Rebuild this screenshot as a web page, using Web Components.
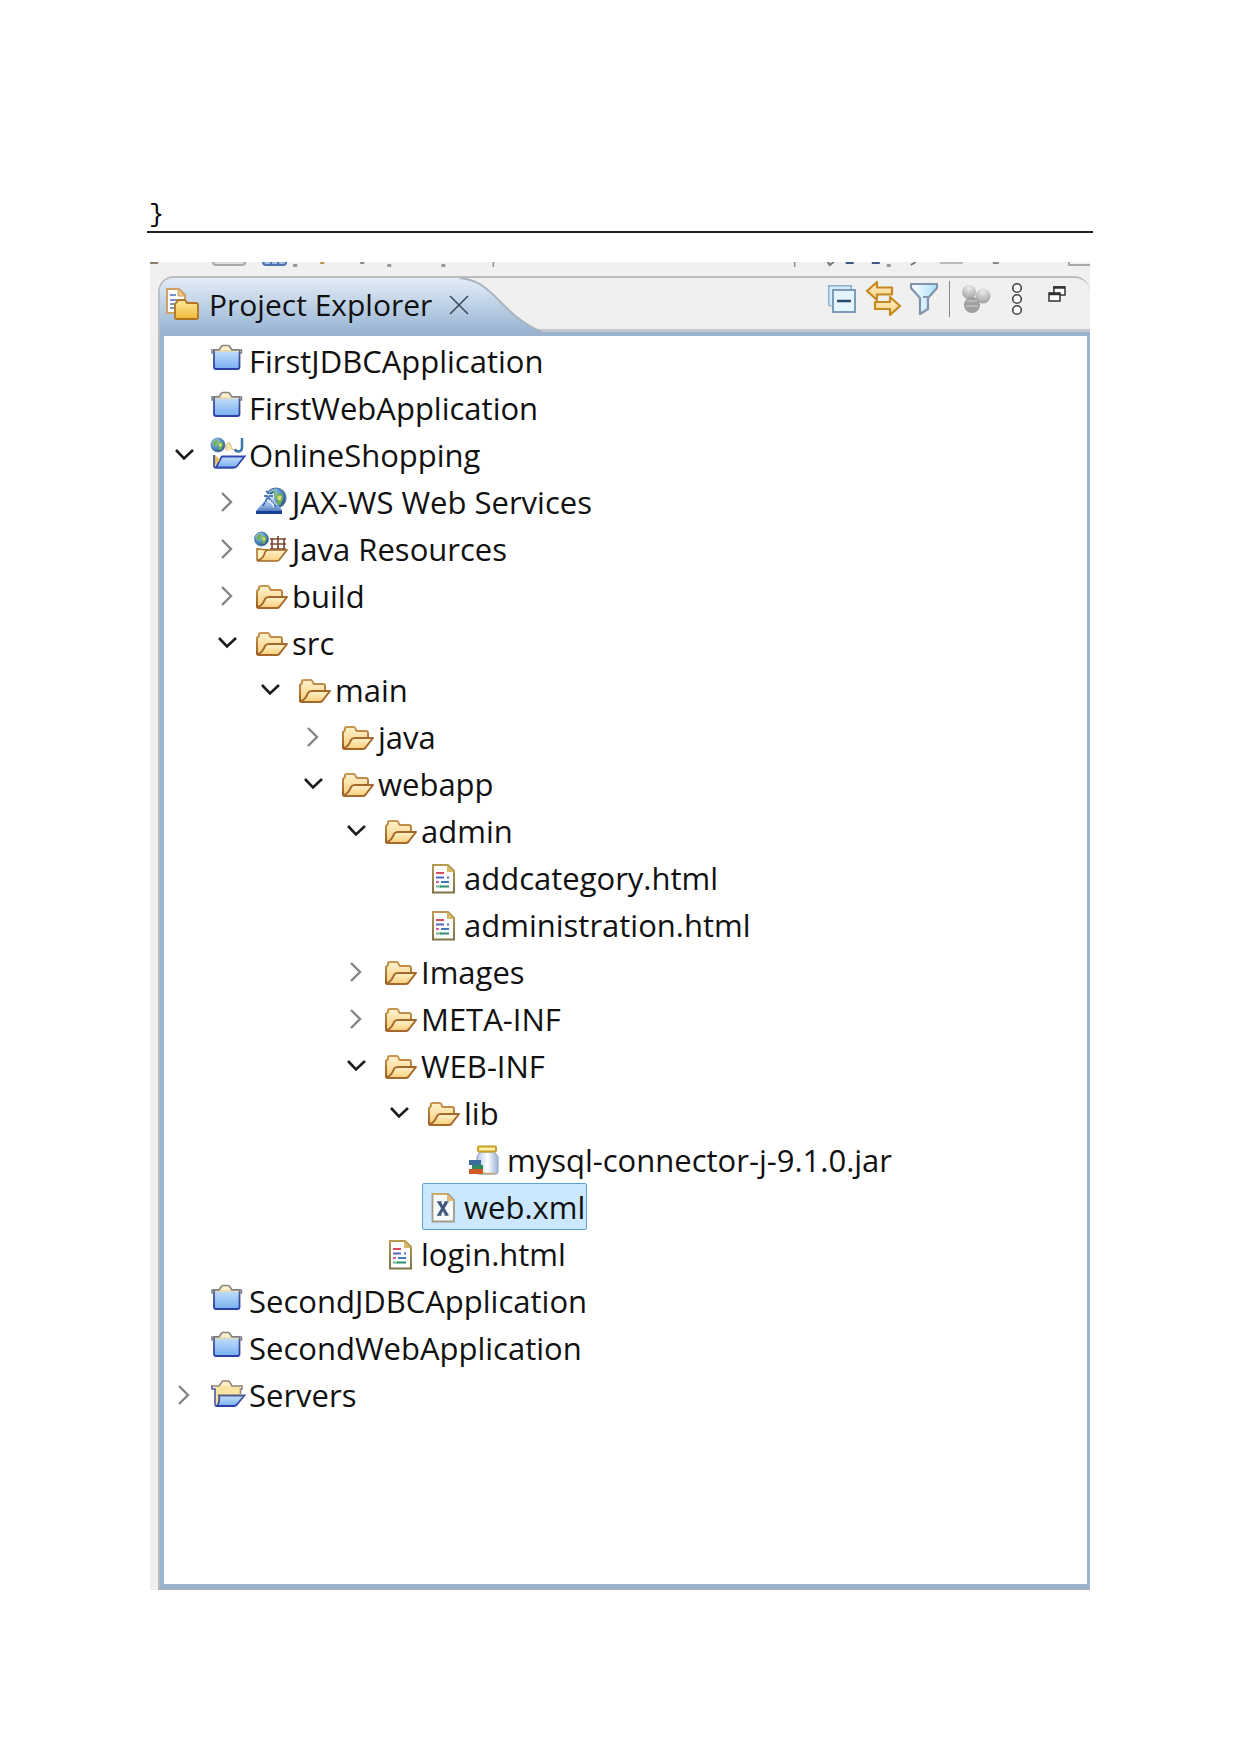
<!DOCTYPE html>
<html lang="en">
<head>
<meta charset="utf-8">
<title>Project Explorer</title>
<style>
  body { margin: 0; background: #fff; color: #111; font-family: "Open Sans", "Noto Sans", sans-serif; }
</style>
</head>
<body>
<doc-page>
  <code-line slot="code">}</code-line>
  <explorer-view>
    <view-tab slot="tab">Project Explorer</view-tab>
    <view-toolbar slot="tools"></view-toolbar>
    <tree-item icon="project" label="FirstJDBCApplication"></tree-item>
    <tree-item icon="project" label="FirstWebApplication"></tree-item>
    <tree-item icon="webproject" label="OnlineShopping" state="open">
      <tree-item icon="jaxws" label="JAX-WS Web Services" state="closed"></tree-item>
      <tree-item icon="javares" label="Java Resources" state="closed"></tree-item>
      <tree-item icon="folder" label="build" state="closed"></tree-item>
      <tree-item icon="folder" label="src" state="open">
        <tree-item icon="folder" label="main" state="open">
          <tree-item icon="folder" label="java" state="closed"></tree-item>
          <tree-item icon="folder" label="webapp" state="open">
            <tree-item icon="folder" label="admin" state="open">
              <tree-item icon="html" label="addcategory.html"></tree-item>
              <tree-item icon="html" label="administration.html"></tree-item>
            </tree-item>
            <tree-item icon="folder" label="Images" state="closed"></tree-item>
            <tree-item icon="folder" label="META-INF" state="closed"></tree-item>
            <tree-item icon="folder" label="WEB-INF" state="open">
              <tree-item icon="folder" label="lib" state="open">
                <tree-item icon="jar" label="mysql-connector-j-9.1.0.jar"></tree-item>
              </tree-item>
              <tree-item icon="xml" label="web.xml" selected></tree-item>
            </tree-item>
            <tree-item icon="html" label="login.html"></tree-item>
          </tree-item>
        </tree-item>
      </tree-item>
    </tree-item>
    <tree-item icon="project" label="SecondJDBCApplication"></tree-item>
    <tree-item icon="project" label="SecondWebApplication"></tree-item>
    <tree-item icon="server" label="Servers" state="closed"></tree-item>
  </explorer-view>
</doc-page>

<script>
const grads = `<defs>
  <linearGradient id="b" x1="0" y1="0" x2="0" y2="1"><stop offset="0" stop-color="#c5e0fa"/><stop offset="1" stop-color="#78b0f0"/></linearGradient>
  <linearGradient id="s" x1="0" y1="0" x2="0" y2="1"><stop offset="0" stop-color="#4c5a8c"/><stop offset="1" stop-color="#2b40a8"/></linearGradient>
  <linearGradient id="y" x1="0" y1="0" x2="0" y2="1"><stop offset="0" stop-color="#fff3d0"/><stop offset="1" stop-color="#f8ce78"/></linearGradient>
  <linearGradient id="o" x1="0" y1="0" x2="0" y2="1"><stop offset="0" stop-color="#c89650"/><stop offset="1" stop-color="#9a5e20"/></linearGradient>
  <linearGradient id="n" x1="0" y1="0" x2="0" y2="1"><stop offset="0" stop-color="#ffe9a0"/><stop offset="1" stop-color="#f0b838"/></linearGradient>
  <linearGradient id="g" x1="0" y1="0" x2="1" y2="0"><stop offset="0" stop-color="#b4c6e2"/><stop offset=".5" stop-color="#fff"/><stop offset="1" stop-color="#9cb2d8"/></linearGradient>
  <linearGradient id="k" x1="0" y1="0" x2="0" y2="1"><stop offset="0" stop-color="#eaf4fe"/><stop offset=".6" stop-color="#94b6e6"/><stop offset="1" stop-color="#2c58ac"/></linearGradient>
  <linearGradient id="f" x1="0" y1="0" x2="1" y2="0"><stop offset="0" stop-color="#fff"/><stop offset="1" stop-color="#a8e0fa"/></linearGradient>
  <radialGradient id="e" cx=".35" cy=".3" r=".75"><stop offset="0" stop-color="#b8dcf0"/><stop offset=".5" stop-color="#5a94c8"/><stop offset="1" stop-color="#28508c"/></radialGradient>
  <radialGradient id="l" cx=".5" cy=".2" r=".8"><stop offset="0" stop-color="#ececec"/><stop offset="1" stop-color="#a2a2a2"/></radialGradient>
</defs>`;
const globe = (x, y, r) => `<g transform="translate(${x} ${y}) scale(${r / 7})"><circle r="7" fill="url(#e)" stroke="#5078a0" stroke-width=".8"/><path d="M-5-1Q-4-5-1-5L0-3-2 0-3 2ZM1-3Q5-4 5 0L3 5 0 4 1 1-1 0Z" fill="#72b04e"/><path d="M1-2L4-1 3 2 1 1Z" fill="#d8dc78"/></g>`;
const page = `<path d="M7 4H22L28 10V31.500H7Z" fill="#fbfdff" stroke="url(#o2)" stroke-width="2"/>`;
const pageGrad = `<defs><linearGradient id="o2" x1="0" y1="0" x2="0" y2="1"><stop offset="0" stop-color="#b89a50"/><stop offset="1" stop-color="#80744a"/></linearGradient></defs>`;
const ICONS = {
  project: [34, 34, `<path d="M3 6H28.500V23Q28.500 25 26.500 25H5Q3 25 3 23Z" fill="url(#b)" stroke="url(#s)" stroke-width="1.800"/><path d="M7 7L9.500 3Q10 1.500 11 1.500H17Q18.500 1.500 19 3L22 7Z" fill="#fff0c8"/><path d="M4 8V6H28V8Z" fill="#e4dcb8"/><path d="M0 6H8L10 3Q10.500 1.500 12 1.500H17Q18.500 1.500 19 3L21 6H31" fill="none" stroke="#8a8684" stroke-width="1.700"/><path d="M1 6V9H3M30.500 6V9H28.500" fill="none" stroke="#7c8294" stroke-width="1.500"/>`],
  webproject: [34, 34, `<path d="M15 13V7L18 4L22 12" fill="#fae6b0" stroke="#dcb878"/><path d="M31 0V9Q31 13.500 27 13.500Q24.500 13.500 24 11" fill="none" stroke="#3a78a8" stroke-width="2.500"/>${globe(7, 7, 7)}<path d="M3 17V28Q3 29.500 5 29.500H23" fill="#fff0b8" stroke="#4050a8" stroke-width="1.800"/><path d="M11 18.500H33.500L26 28Q25 29.500 23 29.500H5L10 20Z" fill="url(#b)" stroke="#3048b0" stroke-width="1.800"/><path d="M4 17L9 22L4 27Z" fill="#e8bc58"/>`],
  server: [34, 34, `<path d="M4 8V26Q4 28 6 28H22L29 17V8Z" fill="#f8e4a0"/><path d="M8 8L10.500 4.500Q11 3 12 3H17Q18.500 3 19 4.500L21 8Z" fill="#fff0c8"/><path d="M0 8H8L10.500 4.500Q11 3 12.500 3H17Q18.500 3 19 4.500L21 8H31V11H29.500V16" fill="none" stroke="#8e8478" stroke-width="1.600"/><path d="M1 8V11H4V26Q4 28 6 28" fill="none" stroke="#5860a0" stroke-width="1.700"/><path d="M11 17.500H33.500L26 26.500Q25 28 23 28H6Q9 24 8 17.500Z" fill="url(#b)" stroke="url(#s)" stroke-width="1.800"/>`],
  folder: [34, 34, `<path d="M3 28V12L5 10V8Q5 7 7 7H14Q15 7 16 10L17 11H26Q28 11 28 13V20L8 28Z" fill="url(#y)" stroke="url(#o)" stroke-width="2" stroke-linejoin="round"/><path d="M3.500 28.500Q9 26 11 20Q12 18 15 18H33L26 27Q25 29 23 29H4Z" fill="url(#y)" stroke="#a4682a" stroke-width="2" stroke-linejoin="round"/>`],
  javares: [34, 34, `<path d="M16 7H32M16 12H32M16 17H32M18 6V18M24 4V18M30 6V18" stroke="#7c4a34" stroke-width="1.700"/><path d="M3 17V28H23L28 18H14Z" fill="#fff0c0" stroke="#b07830" stroke-width="1.600"/><path d="M4 28.500Q10 26 11 20Q12 18 15 18H33L26 27Q25 29 23 29H4Z" fill="url(#y)" stroke="#a4682a" stroke-width="1.600"/>${globe(7.5, 7, 7)}`],
  jaxws: [34, 34, `${globe(22, 13, 10)}<path d="M11 8H20L20 15 28 25V29H2V26L11 15Z" fill="url(#k)"/><path d="M12 6L15 9 20 7M10 11H19M9 21L14 12 22 22" fill="none" stroke="#2858a0" stroke-width="1.500" stroke-dasharray="4 1"/><path d="M2 26H28V29H2Z" fill="#15409a"/><path d="M13 15L18 18 20 22" stroke="#eef6ff" stroke-width="1.500" fill="none"/>`],
  html: [34, 34, `${pageGrad}${page}<path d="M21 4V11H28Z" fill="#d8b868"/><path d="M10 12H18" stroke="#d85060" stroke-width="2"/><path d="M10 16.500H18M21 16.500H23" stroke="#5868c0" stroke-width="2"/><path d="M10 21H13" stroke="#d060a0" stroke-width="2"/><path d="M15 21H23" stroke="#4878b8" stroke-width="2"/><path d="M10 25.500H15" stroke="#70b890" stroke-width="2"/><path d="M14 25.500H23" stroke="#30906c" stroke-width="2"/>`],
  xml: [34, 34, `<path d="M6.500 4H22L28 10V31.500H6.500Z" fill="#f8fafc" stroke="#a09c88" stroke-width="1.800"/><path d="M21 3.500V11H28.500Z" fill="#e0b870"/><path d="M6 4H21" stroke="#d0ac68" stroke-width="1.800"/><path d="M13 12L21 25M20.500 12L13 25" stroke="#41597e" stroke-width="3.200"/><path d="M11 12H15.500M18.500 12H22.500M11 25H15.500M18.500 25H22.500" stroke="#41597e" stroke-width="1.600"/>`],
  jar: [34, 34, `<path d="M11 9H25L29 14V28Q29 31 26 31H10Q8 31 8 28V14Z" fill="url(#g)" stroke="#a0aec8" stroke-width="1.300"/><rect x="9" y="3.500" width="18" height="5" rx="1" fill="#fff3a8" stroke="#c8a028" stroke-width="2"/><path d="M0 17H12V22H0Z" fill="#3a6c9c"/><path d="M3 22H14V26H3Z" fill="#2d8a60"/><path d="M0 26H14V31H0Z" fill="#cf5a26"/><path d="M14 30.500H26" stroke="#c8a878" stroke-width="1.500"/>`],
  explorer: [34, 34, `<path d="M1 1H13L19 7V25H1Z" fill="#fcfcfc" stroke="#cda264" stroke-width="2"/><path d="M12 1V8H19Z" fill="#f0c880" stroke="#cda264"/><path d="M4 7H10M4 12H11M4 16H9M4 20H8" stroke="#7892c4" stroke-width="1.800"/><path d="M9 30V17Q9 15 11 14L12 12H19L21 15H30Q32 15 32 17V30Q32 31 30 31H11Q9 31 9 30Z" fill="url(#n)" stroke="#b07420" stroke-width="1.800"/>`],
  collapse: [30, 30, `<path d="M1 22V2H23V6" fill="#e8f4fc" stroke="#8ab0d0" stroke-width="2"/><path d="M1 22H6V6H23V2H1Z" fill="#d4eafa" stroke="#8ab0d0" stroke-width="1"/><rect x="5" y="6" width="22" height="22" fill="#e4f5ff" stroke="#7c9cba" stroke-width="2"/><path d="M9 17H23" stroke="#264a70" stroke-width="2.500"/>`],
  link: [36, 36, `<path d="M1 10L11 1V6.500H26V13.500H11V19Z" fill="url(#y)" stroke="#c48a20" stroke-width="2.200" stroke-linejoin="round"/><path d="M34 25L24 16V21H9V28H24V34Z" fill="url(#y)" stroke="#c48a20" stroke-width="2.200" stroke-linejoin="round"/>`],
  filter: [30, 34, `<path d="M1 2H27V6L18 16V27L10 32V16L1 6Z" fill="url(#f)" stroke="#8094ac" stroke-width="2.200" stroke-linejoin="round"/><path d="M13 15H18" stroke="#8094ac" stroke-width="2"/>`],
  focus: [30, 30, `<circle cx="7" cy="8" r="7" fill="url(#l)"/><circle cx="21" cy="12" r="7.500" fill="url(#l)"/><circle cx="10" cy="21" r="8" fill="#a0a0a0"/><path d="M4 17H15M4 22H16" stroke="#c0c0c0" stroke-width="1.500"/>`],
  menu: [12, 34, `<g fill="#fff" stroke="#444" stroke-width="1.600"><circle cx="5" cy="6" r="4.300"/><circle cx="5" cy="17" r="4.300"/><circle cx="5" cy="28" r="4.300"/></g>`],
  restore: [18, 18, `<path d="M6 8V2H17V10H12" fill="#fff" stroke="#333" stroke-width="1.500"/><path d="M5 2.500H17" stroke="#333" stroke-width="2.500"/><rect x="1" y="8" width="11" height="8" fill="#fff" stroke="#333" stroke-width="1.500"/><path d="M1 9H12" stroke="#333" stroke-width="2.500"/>`],
  close: [22, 22, `<path d="M2 2L20 20M20 2L2 20" stroke="#38475a" stroke-width="1.500"/>`],
  open: [22, 22, `<path d="M3 7L11 15.500L20 7" fill="none" stroke="#1c1c1c" stroke-width="2.600"/>`],
  closed: [22, 22, `<path d="M6 3L15 12L6 21" fill="none" stroke="#858585" stroke-width="2.400"/>`]
};

class UiIcon extends HTMLElement {
  constructor() {
    super();
    this.attachShadow({ mode: 'open' });
  }
  connectedCallback() {
    const [w, h, art] = ICONS[this.getAttribute('name')];
    this.shadowRoot.innerHTML = `<style>:host{display:block;flex:none}svg{display:block;overflow:visible}</style>
      <svg width="${w}" height="${h}" viewBox="0 0 ${w} ${h}" aria-hidden="true">${grads}${art}</svg>`;
  }
}
customElements.define('ui-icon', UiIcon);

const define = (name, html) => customElements.define(name, class extends HTMLElement {
  constructor() {
    super();
    this.attachShadow({ mode: 'open' }).innerHTML = html;
  }
});

define('doc-page', `<style>
  :host { display: block; padding: 200px 146px 164px 147px; }
  main { padding: 0 3px; }
  .code { border-bottom: 2px solid #222; margin-bottom: 29px; }
</style><div class="code"><slot name="code"></slot></div><main><slot></slot></main>`);

define('code-line', `<style>
  :host { display: block; padding-left: 2px; font: 25px/31px "Liberation Mono", monospace; color: #000; }
</style><slot></slot>`);

define('explorer-view', `<style>
  :host { display: block; background: #f0f0f0; padding-left: 8px; }
  .clip { display: block; height: 14px; margin-left: -8px; }
  .clip svg { display: block; width: 100%; height: 14px; }
  header { display: flex; justify-content: space-between; height: 56px; box-sizing: border-box;
    border-top: 2px solid #bcbcbc; border-bottom: 3px solid #c4c8ce; border-left: 2px solid #b8bec6; border-radius: 16px 16px 0 0; }
  .body { border: solid #9ab4d0; border-width: 4px 3px 4px 4px; background: #fff; padding: 1px 0 166px; }
  .frame { border-left: 2px solid #bbb; border-bottom: 2px solid #a4afbd; }
</style>
<div class="clip"><svg viewBox="0 0 939 14" preserveAspectRatio="none" aria-hidden="true">
  <path d="M0 1H8" stroke="#8c7c68" stroke-width="2"/>
  <path d="M63 0Q63 3 66 3H92Q95 3 95 0" fill="#ddd" stroke="#a8a8a8" stroke-width="2"/>
  <path d="M113 0Q113 3 116 3H133Q136 3 136 0" fill="#a0c0e4" stroke="#4c70b0" stroke-width="2"/>
  <path d="M121 0V3M128 0V3" stroke="#4c70b0" stroke-width="2"/>
  <path d="M143 3.500H147M237 3.500H241M291 3.500H295M736 3.500H740" stroke="#999" stroke-width="3"/>
  <path d="M170 1H174" stroke="#c09050" stroke-width="2"/>
  <path d="M210 1H214M842 1H848" stroke="#888" stroke-width="2"/>
  <path d="M343 0V5M644 0V5" stroke="#909090" stroke-width="1.500"/>
  <path d="M677 0L679 3L683 0M760 3L765 0" fill="none" stroke="#777" stroke-width="2"/>
  <path d="M695 1H703M721 1H729" stroke="#3c5888" stroke-width="2"/>
  <path d="M789 1H812" stroke="#bbb" stroke-width="2"/>
  <path d="M918 0V3H939" fill="none" stroke="#aaa" stroke-width="2"/>
</svg></div>
<header><slot name="tab"></slot><slot name="tools"></slot></header>
<div class="frame"><div class="body" role="tree"><slot></slot></div></div>`);

define('view-tab', `<style>
  :host { display: grid; height: 54px; }
  .shape, .row { grid-area: 1 / 1; }
  .shape { width: 100%; height: 54px; display: block; }
  .row { display: flex; align-items: center; padding: 0 69px 0 6px; height: 54px; }
  h1 { margin: 0 16px 0 9px; font-size: 30px; font-weight: 400; line-height: 40px; white-space: nowrap; }
  button { border: 0; padding: 0; background: none; }
</style>
<svg class="shape" viewBox="0 0 382 54" preserveAspectRatio="none" aria-hidden="true">
  <defs><linearGradient id="t" x1="0" y1="0" x2="0" y2="1"><stop offset="0" stop-color="#e4edf6"/><stop offset="1" stop-color="#98b5d4"/></linearGradient></defs>
  <path d="M0 54V16Q1 1 15 0H300C335 3 340 37 382 54Z" fill="url(#t)"/>
  <path d="M300 0C335 3 340 37 382 54" fill="none" stroke="#a9b2bd" stroke-width="2"/>
</svg>
<div class="row"><ui-icon name="explorer"></ui-icon><h1><slot></slot></h1>
<button aria-label="Close"><ui-icon name="close"></ui-icon></button></div>`);

define('view-toolbar', `<style>
  :host { display: flex; align-items: center; gap: 8px; height: 42px; padding-right: 24px; }
  button { border: 0; padding: 0; background: none; display: block; flex: none; }
  i { width: 1px; height: 36px; background: #888; margin: 0 4px 0 1px; }
  .menu { margin: 0 16px 0 12px; }
  .top { align-self: flex-start; margin-top: 7px; }
</style>
<button aria-label="Collapse All"><ui-icon name="collapse"></ui-icon></button>
<button aria-label="Link with Editor"><ui-icon name="link"></ui-icon></button>
<button aria-label="Filters"><ui-icon name="filter"></ui-icon></button>
<i></i>
<button aria-label="Focus on Active Task"><ui-icon name="focus"></ui-icon></button>
<button class="menu" aria-label="View Menu"><ui-icon name="menu"></ui-icon></button>
<button class="top" aria-label="Restore"><ui-icon name="restore"></ui-icon></button>`);

class TreeItem extends HTMLElement {
  constructor() {
    super();
    this.attachShadow({ mode: 'open' });
  }
  connectedCallback() {
    const state = this.getAttribute('state');
    this.setAttribute('role', 'treeitem');
    if (state) this.setAttribute('aria-expanded', state === 'open');
    this.shadowRoot.innerHTML = `<style>
      :host { display: block; }
      .row { display: flex; height: 47px; }
      .twist { width: 43px; padding: 0 12px 2px 9px; box-sizing: border-box; display: flex; align-items: center; flex: none; }
      button { border: 0; padding: 0; background: none; }
      .item { display: flex; align-items: center; gap: 4px; box-sizing: border-box; border: 1px solid transparent;
        border-radius: 2px; padding: 0 1px 0 3px; }
      .label { font-size: 31px; line-height: 40px; white-space: nowrap; }
      :host([selected]) .item { background: #cce8ff; border-color: #58a4dc; }
      .kids { padding-left: 43px; }
    </style>
    <div class="row"><div class="twist">${state ? `<button aria-label="Toggle"><ui-icon name="${state}"></ui-icon></button>` : ''}</div>
    <div class="item"><ui-icon name="${this.getAttribute('icon')}"></ui-icon><span class="label"></span></div></div>
    <div class="kids" role="group"><slot></slot></div>`;
    this.shadowRoot.querySelector('.label').textContent = this.getAttribute('label');
  }
}
customElements.define('tree-item', TreeItem);
</script>
</body>
</html>
